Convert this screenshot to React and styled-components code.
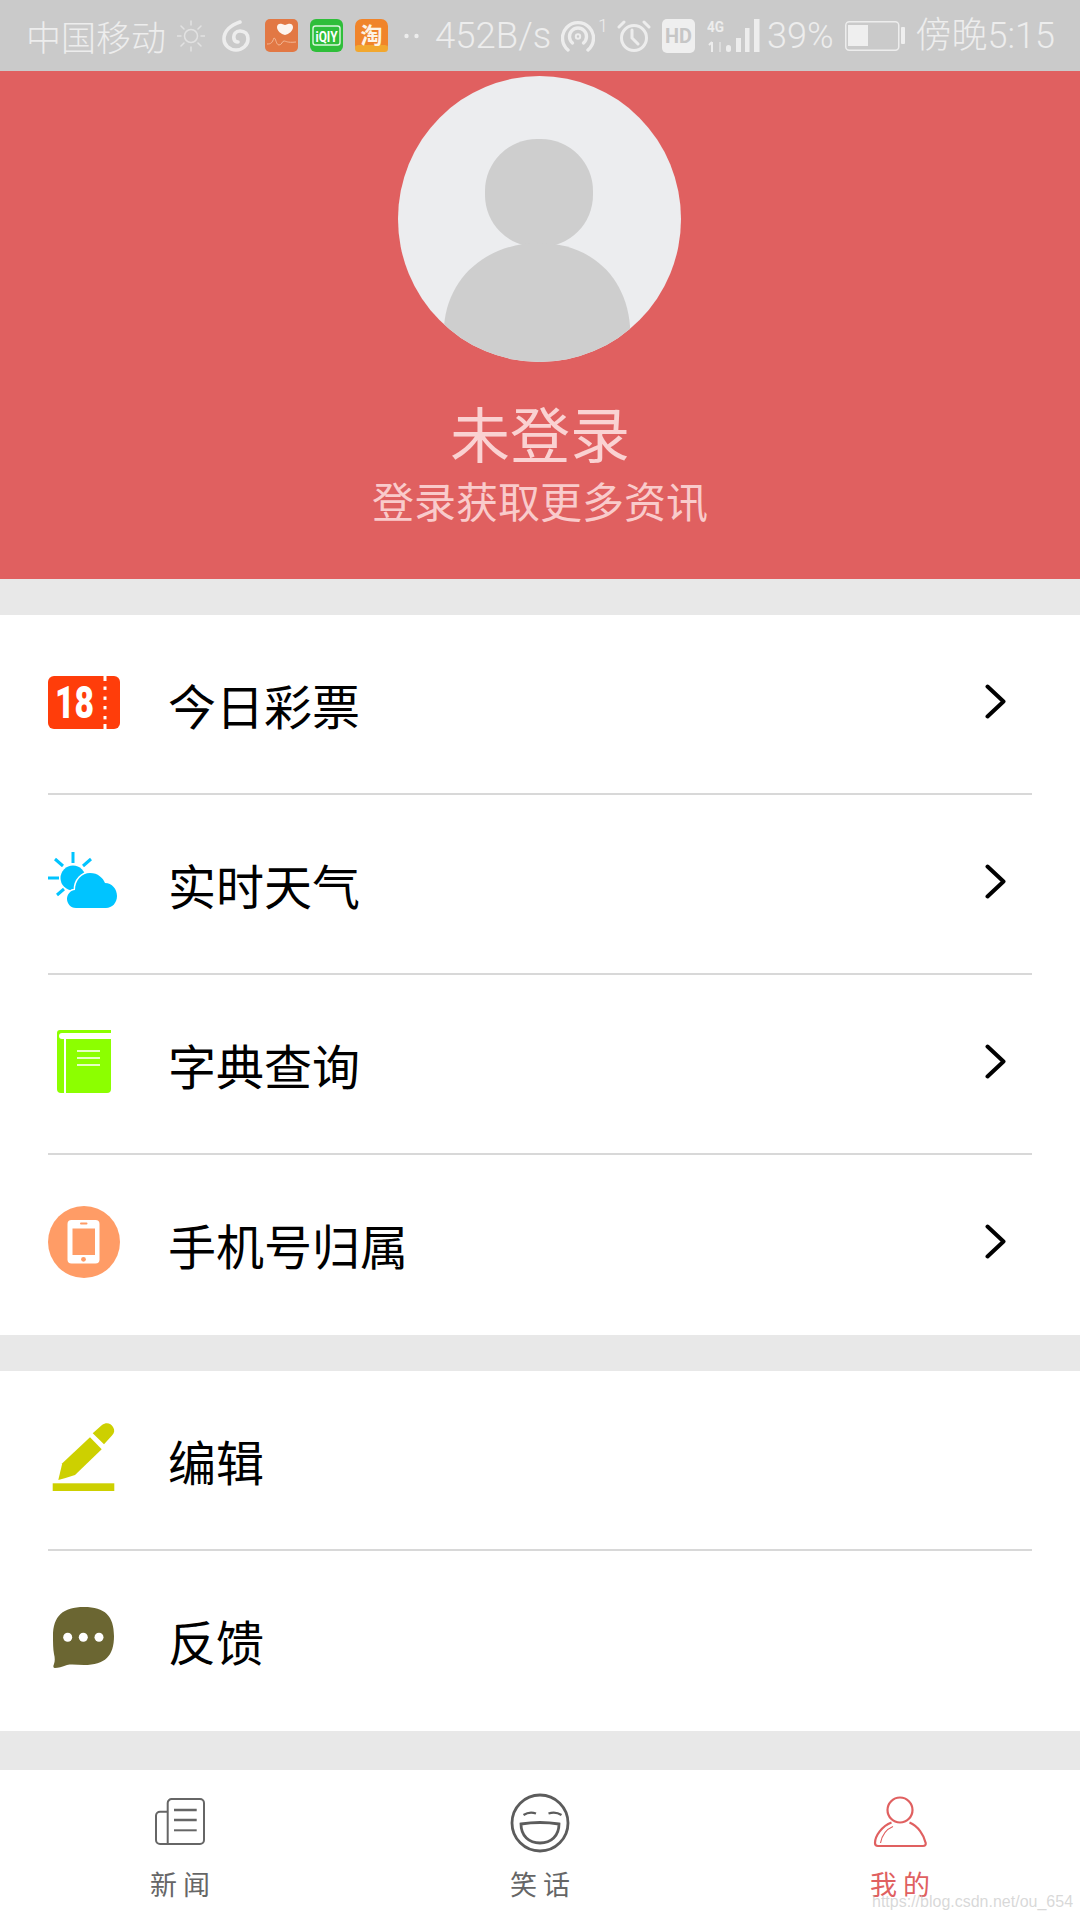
import React from "react";
import styled, { createGlobalStyle } from "styled-components";

const CJK = `"Noto Sans CJK SC", "Noto Sans", sans-serif`;

const GlobalStyle = createGlobalStyle`
  html, body {
    margin: 0;
    padding: 0;
    background: #e8e8e8;
  }
  * {
    box-sizing: border-box;
  }
`;

const Page = styled.div`
  position: relative;
  width: 1080px;
  height: 1920px;
  overflow: hidden;
  display: flex;
  flex-direction: column;
  background: #e8e8e8;
  font-family: ${CJK};
`;

const StatusBar = styled.div`
  height: 71px;
  padding: 0 25px 0 26px;
  display: flex;
  align-items: center;
  justify-content: space-between;
  background: #cacaca;
  color: #ededed;
`;

const StatusGroup = styled.div`
  display: flex;
  align-items: center;
  height: 100%;
`;

const StatusText = styled.span`
  margin-left: ${(p) => p.$gap || 0}px;
  font-size: ${(p) => p.$size || 35}px;
  line-height: 40px;
  font-family: ${(p) => (p.$latin ? `Roboto, ${CJK}` : CJK)};
  font-weight: 300;
  white-space: nowrap;
  align-self: ${(p) => (p.$sup ? "flex-start" : "center")};
  padding-top: ${(p) => (p.$sup ? 6 : 0)}px;
`;

const StatusGlyph = styled.svg`
  display: block;
  flex-shrink: 0;
  margin-left: ${(p) => p.$gap || 0}px;
`;

const Header = styled.header`
  height: 508px;
  padding-top: 5px;
  display: flex;
  flex-direction: column;
  align-items: center;
  background: #e06060;
`;

const Avatar = styled.div`
  width: 283px;
  height: 286px;
  margin-left: -2px;
  border-radius: 50%;
  overflow: hidden;
  background: #ecedef;
  svg {
    display: block;
  }
`;

const Title = styled.h1`
  margin: 34px 0 0;
  font-size: 60px;
  line-height: 72px;
  font-weight: 400;
  color: #fad2d2;
`;

const Subtitle = styled.p`
  margin: 7px 0 0;
  font-size: 42px;
  line-height: 50px;
  font-weight: 400;
  color: #f9cbcb;
`;

const Section = styled.section`
  margin-top: 36px;
  background: #fff;
`;

const Row = styled.div`
  height: 180px;
  padding: 0 48px;
`;

const RowBody = styled.div`
  height: 100%;
  display: flex;
  align-items: center;
  border-bottom: ${(p) => (p.$last ? "none" : "2px solid #d8d8d8")};
  padding-top: ${(p) => (p.$last ? 0 : 2)}px;
`;

const RowIcon = styled.svg`
  display: block;
  flex-shrink: 0;
  margin-bottom: 6px;
`;

const RowLabel = styled.span`
  margin-left: 48px;
  margin-bottom: 2px;
  flex: 1;
  font-size: 48px;
  line-height: 60px;
  color: #000;
`;

const Chevron = styled.svg`
  display: block;
  margin: 0 26px 8px 0;
`;

const TabBar = styled.nav`
  margin-top: auto;
  height: 150px;
  display: grid;
  grid-template-columns: repeat(3, 1fr);
  background: #fff;
`;

const Tab = styled.div`
  padding-top: 23px;
  display: flex;
  flex-direction: column;
  align-items: center;
  color: ${(p) => (p.$active ? "#e06060" : "#666")};
  svg {
    display: block;
  }
`;

const TabLabel = styled.span`
  margin-top: 14px;
  font-size: 27px;
  line-height: 34px;
  white-space: pre;
`;

const Watermark = styled.span`
  position: absolute;
  left: 872px;
  top: 1891px;
  font-family: "Liberation Sans", sans-serif;
  font-size: 16px;
  line-height: 22px;
  color: rgba(190, 190, 190, 0.6);
  white-space: nowrap;
`;

const SunGlyph = () => (
  <StatusGlyph $gap={11} width="28" height="32" viewBox="0 0 28 32" fill="none" stroke="#e2e2e2" strokeWidth="1.5" strokeLinecap="round">
    <circle cx="14" cy="16" r="6.5" />
    <path d="M14 1v4M14 27v4M0 16h4M24 16h4M4 6l3 3M21 23l3 3M24 6l-3 3M7 23l-3 3" />
  </StatusGlyph>
);

const CloudMusicGlyph = () => (
  <StatusGlyph $gap={17} width="28" height="32" viewBox="0 0 28 32" fill="none" stroke="#ededed" strokeWidth="3.6" strokeLinecap="round">
    <path d="M18 2C9 5 2 11 2 19a12 11 0 1 0 24 0c0-5-3-8-8-8-4 0-7 3-6 8 0.5 2 2 3 4 3" />
  </StatusGlyph>
);

const HealthAppGlyph = () => (
  <StatusGlyph $gap={15} width="33" height="33" viewBox="0 0 33 33">
    <rect width="33" height="33" rx="5" fill="#e27844" />
    <path d="M20 16c-4-1-8-4-8-8 0-3 3-4 5-3l3 1 3-1c2-1 5 0 5 3 0 4-4 7-8 8z" fill="#fdf4ee" />
    <path d="M2 25c4 0 5-1 7-6 2 0 2 7 5 7s3-4 5-4 3 2 12 1" fill="none" stroke="#f3b795" strokeWidth="1" />
  </StatusGlyph>
);

const IqiyiGlyph = () => (
  <StatusGlyph $gap={12} width="33" height="33" viewBox="0 0 33 33">
    <rect width="33" height="33" rx="6" fill="#2fbe3a" />
    <rect x="3" y="7" width="27" height="19" rx="2.5" fill="none" stroke="#dcf6de" strokeWidth="1.4" />
    <text x="16.5" y="22.5" textAnchor="middle" fontFamily="Roboto, sans-serif" fontWeight="700" fontSize="15" fill="#fff" textLength="22" lengthAdjust="spacingAndGlyphs">iQIY</text>
  </StatusGlyph>
);

const TaobaoGlyph = () => (
  <StatusGlyph $gap={12} width="33" height="33" viewBox="0 0 33 33">
    <rect width="33" height="33" rx="7" fill="#f0842a" />
    <rect y="26" width="33" height="7" rx="3.5" fill="#f2a72e" />
    <text x="16.5" y="24" textAnchor="middle" fontFamily={CJK} fontWeight="700" fontSize="22" fill="#fdf3e6">淘</text>
  </StatusGlyph>
);

const DotsGlyph = () => (
  <StatusGlyph $gap={16} width="15" height="6" viewBox="0 0 15 6" fill="#ededed">
    <circle cx="2.5" cy="3" r="2.2" />
    <circle cx="12.5" cy="3" r="2.2" />
  </StatusGlyph>
);

const HotspotGlyph = () => (
  <StatusGlyph width="34" height="34" viewBox="0 0 34 34" fill="none" stroke="#ededed" strokeWidth="3.4" strokeLinecap="round">
    <path d="M7 31A15.5 15.5 0 1 1 27 31" />
    <path d="M11.5 24a8.5 8.5 0 1 1 11 0" />
    <circle cx="17" cy="17.5" r="2.2" strokeWidth="2" />
  </StatusGlyph>
);

const AlarmGlyph = () => (
  <StatusGlyph $gap={9} width="34" height="34" viewBox="0 0 34 34" fill="none" stroke="#ededed" strokeWidth="3" strokeLinecap="round">
    <circle cx="17" cy="19" r="12.5" />
    <path d="M15 11v8l6 6M2 8l5-5M32 8l-5-5" />
  </StatusGlyph>
);

const HdGlyph = () => (
  <StatusGlyph $gap={11} width="33" height="34" viewBox="0 0 33 34">
    <rect width="33" height="34" rx="5" fill="#efefef" />
    <text x="16.5" y="24" textAnchor="middle" fontFamily="Roboto, sans-serif" fontWeight="700" fontSize="20" fill="#c6c6c6" textLength="27" lengthAdjust="spacingAndGlyphs">HD</text>
  </StatusGlyph>
);

const NetworkGlyph = () => (
  <StatusGlyph $gap={12} width="53" height="34" viewBox="0 0 53 34" fill="#ededed">
    <text x="0" y="13" fontFamily="Roboto, sans-serif" fontWeight="700" fontSize="15" textLength="17" lengthAdjust="spacingAndGlyphs">4G</text>
    <path d="M5 23v10M2 26l3-3" stroke="#ededed" strokeWidth="2" fill="none" />
    <path d="M13 23v10" stroke="#dcdcdc" strokeWidth="2" fill="none" />
    <rect x="19" y="26" width="5" height="7" rx="2.5" />
    <rect x="29" y="19" width="5" height="14" />
    <rect x="38" y="9" width="4.5" height="24" />
    <rect x="47" y="0" width="5.5" height="33" />
  </StatusGlyph>
);

const BatteryGlyph = () => (
  <StatusGlyph $gap={11} width="60" height="30" viewBox="0 0 60 30">
    <rect x="0.75" y="0.75" width="53" height="28.5" rx="3.5" fill="none" stroke="#ededed" strokeWidth="1.5" />
    <rect x="3" y="4" width="20" height="21" fill="#efefef" />
    <rect x="56" y="6" width="4" height="17" rx="1" fill="#efefef" />
  </StatusGlyph>
);

const TicketIcon = () => (
  <RowIcon width="72" height="72" viewBox="0 0 72 72">
    <rect y="10" width="72" height="53" rx="6" fill="#ff3d0a" />
    <path d="M55.5 10h3v5h-3zM55.5 58h3v5h-3z" fill="#fff" />
    <rect x="55.5" y="20.5" width="3" height="3.4" fill="#fff" />
    <rect x="55.5" y="30.5" width="3" height="3.4" fill="#fff" />
    <rect x="55.5" y="40" width="3" height="3.4" fill="#fff" />
    <rect x="55.5" y="50" width="3" height="3.4" fill="#fff" />
    <text x="7" y="52" fontFamily="Roboto, sans-serif" fontWeight="900" fontSize="44" fill="#fff" textLength="39" lengthAdjust="spacingAndGlyphs">18</text>
  </RowIcon>
);

const WeatherIcon = () => (
  <RowIcon width="72" height="72" viewBox="0 0 72 72" fill="#00c4ff">
    <path d="M25 6v11M7 13l8 7M43 13l-8 7M0 32h11M9 49l7-6" stroke="#00c4ff" strokeWidth="3" fill="none" />
    <circle cx="25" cy="32" r="12.5" />
    <path d="M28 62C22 62 19 57 19 53 19 48 23 44 27 44 27 34 34 27 42 27 50 27 55 32 57 37 64 37 69 43 69 50 69 57 64 62 58 62Z" stroke="#fff" strokeWidth="3" paintOrder="stroke" />
  </RowIcon>
);

const BookIcon = () => (
  <RowIcon width="72" height="72" viewBox="0 0 72 72">
    <path d="M12 4h51v59a4 4 0 0 1-4 4H13a4 4 0 0 1-4-4V7a3 3 0 0 1 3-3z" fill="#8cff00" />
    <path d="M63 7H14a3 3 0 0 0 0 6h49z" fill="#fff" />
    <path d="M17 13v54" stroke="#fff" strokeWidth="2" />
    <path d="M29 25h23M29 32h23M29 39h23" stroke="#e6ffc4" strokeWidth="2" />
  </RowIcon>
);

const PhoneIcon = () => (
  <RowIcon width="72" height="72" viewBox="0 0 72 72">
    <circle cx="36" cy="36" r="36" fill="#ff9c66" />
    <rect x="19.5" y="14" width="32" height="43.5" rx="4" fill="#fff" />
    <rect x="24.5" y="22.5" width="22.5" height="26.5" fill="#ff9c66" />
    <rect x="32" y="16.5" width="7.5" height="2" rx="1" fill="#ff9c66" />
    <circle cx="35.5" cy="53.3" r="2.4" fill="#ff9c66" />
  </RowIcon>
);

const PenIcon = () => (
  <RowIcon width="72" height="72" viewBox="0 0 72 72" fill="#cdd000">
    <path d="M10.3 58L14.3 41.3 42 15.3 53.7 27.3 27 53Q18 56 10.3 58Z" />
    <path d="M44.7 11.3L54 3C58 0 63 1 65 5 67 8 66.5 11 64 13.5L56 22.3Z" />
    <rect x="4.7" y="61.3" width="61.6" height="7.7" />
  </RowIcon>
);

const ChatIcon = () => (
  <RowIcon width="72" height="72" viewBox="0 0 72 72">
    <path d="M36 5C57 5 66 14 66 34 66 54 57 63 36 63 30 63 24 62 19 63 14 65 10 66 7 66 5 66 5 64 6 62 7 59 7 56 6 52 5 47 5 40 5 34 5 14 15 5 36 5Z" fill="#6b6632" />
    <circle cx="19.7" cy="35.3" r="4.5" fill="#fff" />
    <circle cx="35.3" cy="35.3" r="4.5" fill="#fff" />
    <circle cx="51" cy="35.3" r="4.5" fill="#fff" />
  </RowIcon>
);

const NewsIcon = () => (
  <svg width="60" height="60" viewBox="0 0 60 60" fill="none" stroke="#666" strokeWidth="2">
    <path d="M17.7 18.7H10a4 4 0 0 0-4 4V47a4 4 0 0 0 4 4h40a4 4 0 0 0 4-4V10a4 4 0 0 0-4-4H21.7a4 4 0 0 0-4 4v41" />
    <path d="M24 17h22.7M24 27h22.7" strokeWidth="2.4" />
    <path d="M24 37.3h22.7" />
  </svg>
);

const JokeIcon = () => (
  <svg width="60" height="60" viewBox="0 0 60 60" fill="none" stroke="#5c5c5c" strokeWidth="2.8">
    <circle cx="30" cy="30" r="28" />
    <path d="M13.5 22q6-4 12.5-1.5M38.5 20.5q7-2.5 13 1.5" strokeWidth="2.2" />
    <path d="M11 31q19-3 38 0C49 43 41 50 30 50 19 50 11 43 11 31Z" />
  </svg>
);

const MineIcon = () => (
  <svg width="60" height="60" viewBox="0 0 60 60" fill="none" stroke="#e06060" strokeWidth="2.2">
    <circle cx="30" cy="17" r="12.5" />
    <path d="M21.5 29.5C12 33 5 43 5 50 5 52.5 6.5 53 8 53H53C55 53 56 52 55.7 50 54 42 48 33 39.5 29.5" />
    <path d="M10.5 50C12 42 17 36 23 33.5" strokeWidth="1.2" />
  </svg>
);

const RowArrow = () => (
  <Chevron width="21" height="35" viewBox="0 0 21 35" fill="none" stroke="#000" strokeWidth="4" strokeLinecap="round" strokeLinejoin="round">
    <path d="M2.5 2.5L18.5 17.5 2.5 32.5" />
  </Chevron>
);

const services = [
  { label: "今日彩票", icon: <TicketIcon /> },
  { label: "实时天气", icon: <WeatherIcon /> },
  { label: "字典查询", icon: <BookIcon /> },
  { label: "手机号归属", icon: <PhoneIcon /> },
];

const tools = [
  { label: "编辑", icon: <PenIcon /> },
  { label: "反馈", icon: <ChatIcon /> },
];

const tabs = [
  { label: "新 闻", icon: <NewsIcon /> },
  { label: "笑 话", icon: <JokeIcon /> },
  { label: "我 的", icon: <MineIcon />, active: true },
];

export default function App() {
  return (
    <Page>
      <GlobalStyle />
      <StatusBar>
        <StatusGroup>
          <StatusText>中国移动</StatusText>
          <SunGlyph />
          <CloudMusicGlyph />
          <HealthAppGlyph />
          <IqiyiGlyph />
          <TaobaoGlyph />
          <DotsGlyph />
          <StatusText $gap={16} $size={36.5} $latin>452B/s</StatusText>
        </StatusGroup>
        <StatusGroup>
          <HotspotGlyph />
          <StatusText $gap={3} $size={18} $latin $sup>1</StatusText>
          <AlarmGlyph />
          <HdGlyph />
          <NetworkGlyph />
          <StatusText $gap={7} $size={36} $latin>39%</StatusText>
          <BatteryGlyph />
          <StatusText $gap={11} $size={36} $latin>傍晚5:15</StatusText>
        </StatusGroup>
      </StatusBar>

      <Header>
        <Avatar>
          <svg width="283" height="286" viewBox="0 0 283 286" fill="#cecece">
            <rect x="87" y="63" width="108" height="108" rx="52" />
            <path d="M46 250C50 200 90 167 141 167 192 167 228 200 232 250V286H46Z" />
          </svg>
        </Avatar>
        <Title>未登录</Title>
        <Subtitle>登录获取更多资讯</Subtitle>
      </Header>

      <Section>
        {services.map((item, i) => (
          <Row key={item.label}>
            <RowBody $last={i === services.length - 1}>
              {item.icon}
              <RowLabel>{item.label}</RowLabel>
              <RowArrow />
            </RowBody>
          </Row>
        ))}
      </Section>

      <Section>
        {tools.map((item, i) => (
          <Row key={item.label}>
            <RowBody $last={i === tools.length - 1}>
              {item.icon}
              <RowLabel>{item.label}</RowLabel>
            </RowBody>
          </Row>
        ))}
      </Section>

      <TabBar>
        {tabs.map((tab) => (
          <Tab key={tab.label} $active={tab.active}>
            {tab.icon}
            <TabLabel>{tab.label}</TabLabel>
          </Tab>
        ))}
      </TabBar>
      <Watermark>https://blog.csdn.net/ou_654</Watermark>
    </Page>
  );
}
